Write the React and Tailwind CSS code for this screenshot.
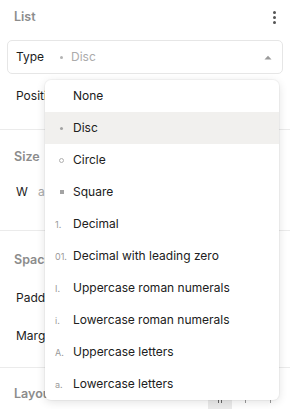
import React from "react";

const items = [
  { m: null, label: "None" },
  { m: "disc", label: "Disc", active: true },
  { m: "circle", label: "Circle" },
  { m: "square", label: "Square" },
  { m: "1.", label: "Decimal" },
  { m: "01.", label: "Decimal with leading zero" },
  { m: "I.", label: "Uppercase roman numerals" },
  { m: "i.", label: "Lowercase roman numerals" },
  { m: "A.", label: "Uppercase letters" },
  { m: "a.", label: "Lowercase letters" },
];

function Marker({ m }) {
  if (!m) return null;
  if (m === "disc")
    return <span className="ml-[5px] block w-[3px] h-[3px] rounded-full bg-[#a3a3a3]" />;
  if (m === "circle")
    return <span className="ml-[4px] block w-[5px] h-[5px] rounded-full border border-[#b0b0b0]" />;
  if (m === "square")
    return <span className="ml-[5px] block w-[4px] h-[4px] bg-[#a3a3a3]" />;
  return <span className="text-[9px] text-[#9a9a9a] leading-none">{m}</span>;
}

function Header({ children, right }) {
  return (
    <div className="flex items-center justify-between pl-[14px] pr-[14px] h-[34px]">
      <span className="text-[12.5px] font-semibold text-[#8c8c8c]">{children}</span>
      {right}
    </div>
  );
}

function Row({ label, value, h = "h-[32px]" }) {
  return (
    <div className={`flex items-center pl-[16px] ${h}`}>
      <span className="text-[12px] text-[#1c1c1c] w-[22px]">{label}</span>
      {value && <span className="text-[12px] text-[#a8a8a8]">{value}</span>}
    </div>
  );
}

export default function App() {
  return (
    <div
      className="relative w-[290px] h-[409px] overflow-hidden bg-white"
      style={{ fontFamily: "Inter, 'Noto Sans', sans-serif" }}
    >
      {/* List */}
      <div className="border-b border-[#ebebeb] pb-[17px]">
        <Header
          right={
            <div className="flex flex-col gap-[2px] items-center w-[4px] mt-[1px]">
              <span className="block w-[3px] h-[3px] rounded-full bg-[#555]" />
              <span className="block w-[3px] h-[3px] rounded-full bg-[#555]" />
              <span className="block w-[3px] h-[3px] rounded-full bg-[#555]" />
            </div>
          }
        >
          List
        </Header>
        <div className="mx-[7px] mt-[6px] h-[34px] rounded-[5px] border border-[#e6e6e6] flex items-center pl-[8px] pr-[10px]">
          <span className="text-[12px] text-[#1c1c1c] w-[37px]">Type</span>
          <span className="block w-[3px] h-[3px] rounded-full bg-[#b3b3b3] ml-[7px] mr-[8px]" />
          <span className="text-[12px] text-[#ababab] flex-1">Disc</span>
          <svg width="8" height="5" viewBox="0 0 8 5">
            <path d="M0.5 4.5 L4 0.8 L7.5 4.5 Z" fill="#9a9a9a" />
          </svg>
        </div>
        <div className="mt-[6px]">
          <Row label="Position" />
        </div>
      </div>

      {/* Size */}
      <div className="border-b border-[#ebebeb] pt-[10px] pb-[22px]">
        <Header>Size</Header>
        <div className="mt-[2px]">
          <Row label="W" value="auto" />
        </div>
      </div>

      {/* Spacing */}
      <div className="border-b border-[#ebebeb] pt-[12px] pb-[12px]">
        <Header>Spacing</Header>
        <div className="mt-[2px]">
          <Row label="Padding" h="h-[38px]" />
          <Row label="Margin" h="h-[38px]" />
        </div>
      </div>

      {/* Layout */}
      <div className="pt-[9px] flex items-start justify-between">
        <Header>Layout</Header>
        <div className="flex items-center mt-[21px] mr-[8px] gap-[1px]">
          <div className="w-[24px] h-[20px] rounded-[3px] bg-[#ebebeb] flex items-start justify-center pt-[2px] gap-[2px]">
            <span className="block w-[1px] h-[3px] bg-[#666]" />
            <span className="block w-[1px] h-[3px] bg-[#666]" />
          </div>
          <div className="w-[24px] h-[20px] flex items-start justify-center pt-[2px]">
            <span className="block w-[1px] h-[3px] bg-[#999]" />
          </div>
          <div className="w-[24px] h-[20px] flex items-start justify-center pt-[2px]">
            <span className="block w-[1px] h-[3px] bg-[#999]" />
          </div>
        </div>
      </div>

      {/* Dropdown menu */}
      <div className="absolute left-[45px] top-[80px] w-[234px] rounded-[6px] bg-white shadow-[0_2px_10px_rgba(0,0,0,0.12),0_0_0_1px_rgba(0,0,0,0.03)] overflow-hidden">
        {items.map((it) => (
          <div
            key={it.label}
            className={`flex items-center h-[32px] ${it.active ? "bg-[#f1f0ee]" : ""}`}
          >
            <div className="w-[28px] pl-[10px] flex items-center">
              <Marker m={it.m} />
            </div>
            <span className="text-[12px] text-[#202020]">{it.label}</span>
          </div>
        ))}
      </div>
    </div>
  );
}
